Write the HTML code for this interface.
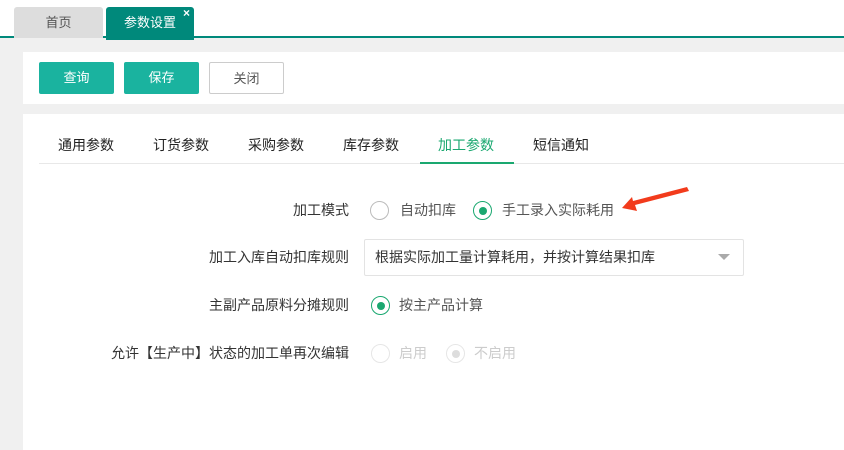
<!DOCTYPE html>
<html><head><meta charset="utf-8"><style>
*{margin:0;padding:0;box-sizing:border-box}
body{width:844px;height:450px;overflow:hidden;background:#f0f0f0;font-family:"Liberation Sans","Noto Sans CJK SC",sans-serif;font-size:13px;color:#333;position:relative}
.a{position:absolute}
.topbar{left:0;top:0;width:844px;height:38px;background:#fff;border-bottom:2px solid #00897b}
.tab{top:7px;height:31px;line-height:31px;text-align:center;border-radius:3px 3px 0 0}
.btn{top:62px;height:32px;line-height:32px;text-align:center;width:75px;border-radius:2px;color:#fff;background:#1ab39f}
.radio{width:19px;height:19px;border-radius:50%;border:1.5px solid #bbb;background:#fff;display:flex;align-items:center;justify-content:center}
.radio.on{border-color:#1aa870}
.radio.on::after{content:"";width:8px;height:8px;border-radius:50%;background:#1aa870}
.radio.dis{border-color:#e6e6e6}
.radio.dis.on::after{background:#ddd}
.lbl{text-align:right;width:300px;left:49px}
.f{font-size:14px;line-height:20px}
</style></head><body>
<div class="a topbar"></div>
<div class="a tab" style="left:14px;width:89px;background:#ddd;color:#555">首页</div>
<div class="a tab" style="left:106px;width:88px;background:#00897b;color:#fff;top:7px;height:33px">参数设置<span style="position:absolute;right:4px;top:-9px;font-size:12px;font-weight:bold">×</span></div>
<div class="a" style="left:23px;top:52px;width:821px;height:52px;background:#fff"></div>
<div class="a btn" style="left:39px">查询</div>
<div class="a btn" style="left:124px">保存</div>
<div class="a btn" style="left:209px;background:#fff;color:#555;border:1px solid #ccc">关闭</div>
<div class="a" style="left:23px;top:114px;width:821px;height:336px;background:#fff"></div>
<div class="a" style="left:39px;top:163px;width:805px;height:1px;background:#e8e8e8"></div>
<div class="a" style="left:420px;top:162px;width:94px;height:2px;background:#1aa870"></div>
<div class="a" style="top:135px;left:58px;font-size:14px;color:#222">通用参数</div>
<div class="a" style="top:135px;left:153px;font-size:14px;color:#222">订货参数</div>
<div class="a" style="top:135px;left:248px;font-size:14px;color:#222">采购参数</div>
<div class="a" style="top:135px;left:343px;font-size:14px;color:#222">库存参数</div>
<div class="a" style="top:135px;left:438px;font-size:14px;color:#1aa870">加工参数</div>
<div class="a" style="top:135px;left:533px;font-size:14px;color:#222">短信通知</div>

<div class="a lbl f" style="top:200px">加工模式</div>
<div class="a radio" style="left:370px;top:201px"></div>
<div class="a f" style="left:400px;top:200px;color:#555">自动扣库</div>
<div class="a radio on" style="left:473px;top:201px"></div>
<div class="a f" style="left:502px;top:200px;color:#555">手工录入实际耗用</div>
<svg class="a" style="left:615px;top:182px" width="80" height="35"><polygon points="72,5 74,9 20,23 22,29 7,26 17,15 18,19" fill="#f23b1c"/></svg>

<div class="a lbl f" style="top:247px">加工入库自动扣库规则</div>
<div class="a" style="left:364px;top:239px;width:380px;height:37px;border:1px solid #e3e3e3;border-radius:2px"></div>
<div class="a f" style="left:375px;top:247px;color:#333">根据实际加工量计算耗用，并按计算结果扣库</div>
<div class="a" style="left:718px;top:254px;width:0;height:0;border-left:6px solid transparent;border-right:6px solid transparent;border-top:6px solid #aaa"></div>

<div class="a lbl f" style="top:295px">主副产品原料分摊规则</div>
<div class="a radio on" style="left:371px;top:296px"></div>
<div class="a f" style="left:399px;top:295px;color:#555">按主产品计算</div>

<div class="a lbl f" style="top:343px">允许【生产中】状态的加工单再次编辑</div>
<div class="a radio dis" style="left:371px;top:344px"></div>
<div class="a f" style="left:399px;top:343px;color:#ccc">启用</div>
<div class="a radio dis on" style="left:446px;top:344px"></div>
<div class="a f" style="left:474px;top:343px;color:#ccc">不启用</div>
</body></html>
